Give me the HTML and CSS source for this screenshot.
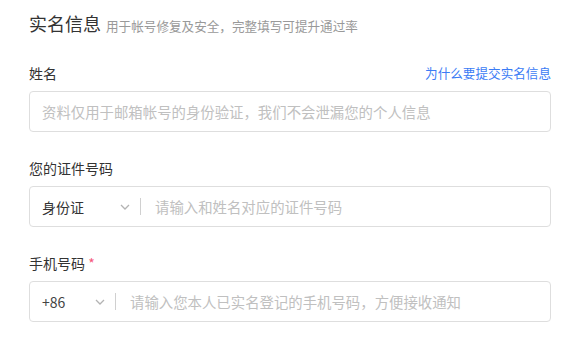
FILE: index.html
```html
<!DOCTYPE html>
<html lang="zh-CN">
<head>
    <meta charset="UTF-8">
    <meta name="viewport" content="width=device-width, initial-scale=1.0">
    <title>实名信息</title>
    <link rel="stylesheet" href="styles.css">
</head>
<body>
    <div class="container">
        <h2 class="title">实名信息<span class="sub">用于帐号修复及安全，完整填写可提升通过率</span></h2>

        <div class="field">
            <div class="label-row">
                <label for="realName">姓名</label>
                <a class="link" href="#">为什么要提交实名信息</a>
            </div>
            <div class="box">
                <input type="text" id="realName" placeholder="资料仅用于邮箱帐号的身份验证，我们不会泄漏您的个人信息">
            </div>
        </div>

        <div class="field">
            <div class="label-row">
                <label for="idNo">您的证件号码</label>
            </div>
            <div class="box">
                <div class="select select-id">
                    <span>身份证</span>
                    <svg class="arrow" width="10" height="6" viewBox="0 0 10 6"><path d="M1 1l4 4 4-4" fill="none" stroke="#b3b3b3" stroke-width="1.3"/></svg>
                </div>
                <span class="divider"></span>
                <input type="text" id="idNo" placeholder="请输入和姓名对应的证件号码">
            </div>
        </div>

        <div class="field">
            <div class="label-row">
                <label for="phone">手机号码 <em class="required">*</em></label>
            </div>
            <div class="box">
                <div class="select select-phone">
                    <span>+86</span>
                    <svg class="arrow" width="10" height="6" viewBox="0 0 10 6"><path d="M1 1l4 4 4-4" fill="none" stroke="#b3b3b3" stroke-width="1.3"/></svg>
                </div>
                <span class="divider"></span>
                <input type="text" id="phone" placeholder="请输入您本人已实名登记的手机号码，方便接收通知">
            </div>
        </div>
    </div>
</body>
</html>
```

FILE: styles.css
```css
/* 基础样式 */
body {
    margin: 0;
    padding: 11px 0 0 29px;
    font-family: "Noto Sans CJK SC", "Noto Sans", sans-serif;
    color: #333;
    background: #fff;
}

.container {
    width: 522px;
}

/* 标题 */
.title {
    display: flex;
    align-items: baseline;
    height: 24px;
    margin: 0 0 28px;
    font-size: 18px;
    font-weight: normal;
    line-height: 24px;
    color: #333;
}

.title .sub {
    margin-left: 5px;
    font-size: 12.6px;
    color: #999;
}

/* 表单项 */
.field {
    margin-bottom: 26px;
}

.label-row {
    display: flex;
    justify-content: space-between;
    align-items: center;
    height: 20px;
    margin-bottom: 8px;
}

label {
    font-size: 14px;
    line-height: 20px;
    color: #333;
}

.required {
    font-style: normal;
    color: #f5587b;
}

.link {
    font-size: 12.6px;
    line-height: 20px;
    color: #3b7cf5;
    text-decoration: none;
}

/* 输入框 */
.box {
    display: flex;
    align-items: center;
    height: 41px;
    padding: 0 12px;
    border: 1px solid #dedede;
    border-radius: 4px;
    box-sizing: border-box;
}

.box input {
    flex: 1;
    min-width: 0;
    border: none;
    outline: none;
    padding: 0;
    font-family: inherit;
    font-size: 14.4px;
    color: #333;
    background: transparent;
}

.box input::placeholder {
    color: #c0c0c0;
}

/* 下拉选择 */
.select {
    display: flex;
    align-items: center;
    justify-content: space-between;
    font-size: 14px;
    color: #333;
}

.select-id {
    width: 88px;
}

.select-phone {
    width: 63px;
    color: #444;
}

.divider {
    width: 1px;
    height: 17px;
    margin: 0 14px 0 10px;
    background: #d0d0d0;
}
```
